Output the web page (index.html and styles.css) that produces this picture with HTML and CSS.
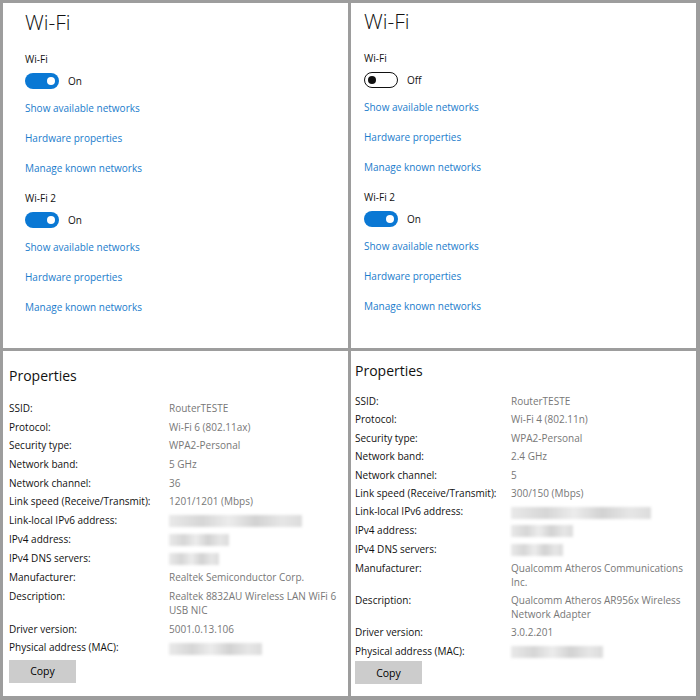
FILE: index.html
```html
<!DOCTYPE html>
<html>
    <head>
        <title>Wi-Fi</title>
        <link rel="stylesheet" href="styles.css">
    </head>
    <body>
        <div class="grid">
            <div class="panel wifi wifi-left">
                <h1 class="title">Wi-Fi</h1>
                <div class="adapter">
                    <div class="name">Wi-Fi</div>
                    <div class="state"><span class="toggle on"></span><span>On</span></div>
                    <a class="link first">Show available networks</a>
                    <a class="link">Hardware properties</a>
                    <a class="link">Manage known networks</a>
                </div>
                <div class="adapter">
                    <div class="name">Wi-Fi 2</div>
                    <div class="state"><span class="toggle on"></span><span>On</span></div>
                    <a class="link first">Show available networks</a>
                    <a class="link">Hardware properties</a>
                    <a class="link">Manage known networks</a>
                </div>
            </div>

            <div class="panel wifi wifi-right">
                <h1 class="title">Wi-Fi</h1>
                <div class="adapter">
                    <div class="name">Wi-Fi</div>
                    <div class="state"><span class="toggle off"></span><span>Off</span></div>
                    <a class="link first">Show available networks</a>
                    <a class="link">Hardware properties</a>
                    <a class="link">Manage known networks</a>
                </div>
                <div class="adapter">
                    <div class="name">Wi-Fi 2</div>
                    <div class="state"><span class="toggle on"></span><span>On</span></div>
                    <a class="link first">Show available networks</a>
                    <a class="link">Hardware properties</a>
                    <a class="link">Manage known networks</a>
                </div>
            </div>

            <div class="panel props props-left">
                <h2 class="subtitle">Properties</h2>
                <dl class="list">
                    <dt>SSID:</dt><dd>RouterTESTE</dd>
                    <dt>Protocol:</dt><dd>Wi-Fi 6 (802.11ax)</dd>
                    <dt>Security type:</dt><dd>WPA2-Personal</dd>
                    <dt>Network band:</dt><dd>5 GHz</dd>
                    <dt>Network channel:</dt><dd>36</dd>
                    <dt>Link speed (Receive/Transmit):</dt><dd>1201/1201 (Mbps)</dd>
                    <dt>Link-local IPv6 address:</dt><dd><span class="blur w133"></span></dd>
                    <dt>IPv4 address:</dt><dd><span class="blur w60"></span></dd>
                    <dt>IPv4 DNS servers:</dt><dd><span class="blur w50"></span></dd>
                    <dt>Manufacturer:</dt><dd>Realtek Semiconductor Corp.</dd>
                    <dt>Description:</dt><dd>Realtek 8832AU Wireless LAN WiFi 6 USB NIC</dd>
                    <dt>Driver version:</dt><dd>5001.0.13.106</dd>
                    <dt>Physical address (MAC):</dt><dd><span class="blur w93"></span></dd>
                </dl>
                <button class="copy">Copy</button>
            </div>

            <div class="panel props props-right">
                <h2 class="subtitle">Properties</h2>
                <dl class="list">
                    <dt>SSID:</dt><dd>RouterTESTE</dd>
                    <dt>Protocol:</dt><dd>Wi-Fi 4 (802.11n)</dd>
                    <dt>Security type:</dt><dd>WPA2-Personal</dd>
                    <dt>Network band:</dt><dd>2.4 GHz</dd>
                    <dt>Network channel:</dt><dd>5</dd>
                    <dt>Link speed (Receive/Transmit):</dt><dd>300/150 (Mbps)</dd>
                    <dt>Link-local IPv6 address:</dt><dd><span class="blur w140"></span></dd>
                    <dt>IPv4 address:</dt><dd><span class="blur w62"></span></dd>
                    <dt>IPv4 DNS servers:</dt><dd><span class="blur w52"></span></dd>
                    <dt>Manufacturer:</dt><dd>Qualcomm Atheros Communications Inc.</dd>
                    <dt>Description:</dt><dd>Qualcomm Atheros AR956x Wireless Network Adapter</dd>
                    <dt>Driver version:</dt><dd>3.0.2.201</dd>
                    <dt>Physical address (MAC):</dt><dd><span class="blur w92"></span></dd>
                </dl>
                <button class="copy">Copy</button>
            </div>
        </div>
    </body>
</html>
```

FILE: styles.css
```css
* {
    margin: 0;
    padding: 0;
    box-sizing: border-box;
}

body {
    width: 700px;
    height: 700px;
    background: #9d9d9d;
    font-family: "Open Sans", "Noto Sans", sans-serif;
    font-size: 10px;
    color: #111;
}

.grid {
    display: grid;
    grid-template-columns: 1fr 1fr;
    grid-template-rows: 1fr 1fr;
    gap: 3px;
    height: 700px;
    padding: 3px 4px 4px 3px;
}

.panel {
    background: #fff;
    overflow: hidden;
}

/* Wi-Fi panels */
.wifi-left {
    padding: 5px 0 0 22px;
}

.wifi-right {
    padding: 4px 0 0 13px;
}

.title {
    font-size: 21px;
    font-weight: 300;
    line-height: 28px;
}

.adapter {
    display: flex;
    flex-direction: column;
    align-items: flex-start;
    margin-top: 14px;
}

.adapter:first-of-type {
    margin-top: 15px;
}

.name,
.link {
    line-height: 16px;
}

.state {
    display: flex;
    align-items: center;
    gap: 9px;
    height: 20px;
    margin-top: 4px;
}

.toggle {
    position: relative;
    width: 34px;
    height: 16px;
    border-radius: 8px;
}

.toggle::after {
    content: "";
    position: absolute;
    top: 50%;
    width: 8px;
    height: 8px;
    margin-top: -4px;
    border-radius: 50%;
}

.toggle.on {
    background: #0a78d4;
}

.toggle.on::after {
    right: 4px;
    background: #fff;
}

.toggle.off {
    border: 1.5px solid #111;
}

.toggle.off::after {
    left: 3px;
    background: #111;
}

.link {
    color: #1a7ccc;
    margin-top: 14px;
}

.link.first {
    margin-top: 9px;
}

/* Properties panels */
.props-left {
    padding: 13px 8px 0 6px;
}

.props-right {
    padding: 8px 0 0 4px;
}

.subtitle {
    font-size: 14px;
    font-weight: 400;
    line-height: 24px;
}

.list {
    display: grid;
    line-height: 14px;
}

.props-left .list {
    grid-template-columns: 160px 1fr;
    row-gap: 4.7px;
    margin-top: 13px;
}

.props-right .list {
    grid-template-columns: 156px 1fr;
    row-gap: 4.4px;
    margin-top: 11px;
}

.list dd {
    color: #777;
}

.blur {
    display: inline-block;
    height: 12px;
    vertical-align: middle;
    background: linear-gradient(90deg, #e9e9e9, #d6d6d6 25%, #ececec 45%, #d2d2d2 65%, #e6e6e6 85%, #dcdcdc);
    filter: blur(1.5px);
}

.w133 { width: 133px; }
.w60 { width: 60px; }
.w50 { width: 50px; }
.w93 { width: 93px; }
.w140 { width: 140px; }
.w62 { width: 62px; }
.w52 { width: 52px; }
.w92 { width: 92px; }

.copy {
    display: block;
    width: 67px;
    height: 23px;
    margin-top: 5px;
    border: none;
    background: #cccccc;
    font-family: inherit;
    font-size: 10.5px;
    color: #000;
}

.props-right .copy {
    margin-top: 3px;
}
```
